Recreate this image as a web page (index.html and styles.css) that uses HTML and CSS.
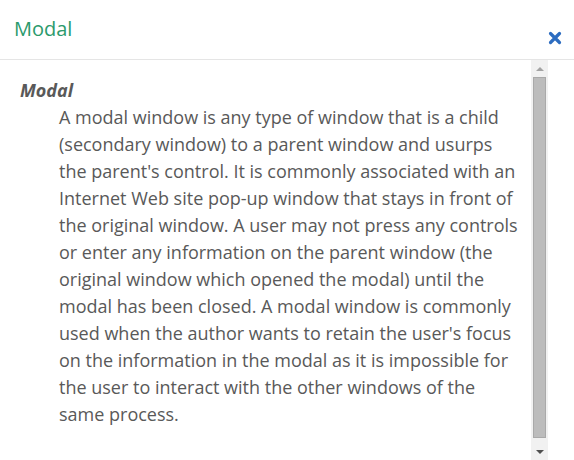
FILE: index.html
```html
<html>
  <head>
    <meta charset="utf-8" />
    <title>Modal</title>
    <link rel="stylesheet" href="styles.css">
  </head>
  <body>
    <div class="modal">
      <div class="modal-header">
        <h3 class="modal-title">Modal</h3>
        <button class="close" aria-label="Close">
          <svg width="14" height="14" viewBox="0 0 14 14">
            <path d="M2.5 2.5 L11.5 11.5 M11.5 2.5 L2.5 11.5" stroke="#2c6cc0" stroke-width="3.2" stroke-linecap="round" />
          </svg>
        </button>
      </div>
      <div class="modal-main">
        <div class="modal-body">
          <dl>
            <dt>Modal</dt>
            <dd>A modal window is any type of window that is a child (secondary window) to a parent window and usurps the parent's control. It is commonly associated with an Internet Web site pop-up window that stays in front of the original window. A user may not press any controls or enter any information on the parent window (the original window which opened the modal) until the modal has been closed. A modal window is commonly used when the author wants to retain the user's focus on the information in the modal as it is impossible for the user to interact with the other windows of the same process.</dd>
          </dl>
        </div>
        <div class="scrollbar">
          <div class="scroll-btn"><span class="arrow-up"></span></div>
          <div class="scroll-track"><div class="scroll-thumb"></div></div>
          <div class="scroll-btn"><span class="arrow-down"></span></div>
        </div>
      </div>
    </div>
  </body>
</html>
```

FILE: styles.css
```css
* {
  box-sizing: border-box;
  margin: 0;
  padding: 0;
}

body {
  background: #fff;
  font-family: 'Open Sans', sans-serif;
  overflow: hidden;
}

.modal {
  display: flex;
  flex-direction: column;
  height: 460px;
}

.modal-header {
  display: flex;
  flex-direction: row;
  justify-content: space-between;
  height: 60px;
  padding: 0 12px 0 14px;
  border-bottom: 1px solid #e5e5e5;
}

.modal-title {
  font-weight: normal;
  font-size: 20px;
  color: #2b9a6c;
  line-height: 60px;
  margin-top: -1px;
}

.close {
  background: transparent;
  border: none;
  margin-top: 31px;
  width: 14px;
  height: 14px;
  cursor: pointer;
}

.modal-main {
  display: flex;
  flex-direction: row;
  flex: 1;
  min-height: 0;
  margin-right: 26px;
}

.modal-body {
  flex: 1;
  overflow: hidden;
  padding: 17px 10px 11px 20px;
  color: #595959;
  font-size: 18px;
  line-height: 27px;
}

dt {
  font-weight: bold;
  font-style: italic;
}

dd {
  margin-left: 39px;
}

/* scrollbar drawn by hand, the screenshot hides native ones */
.scrollbar {
  width: 17px;
  display: flex;
  flex-direction: column;
  background: #f1f1f1;
}

.scroll-btn {
  height: 17px;
  display: flex;
  align-items: center;
  justify-content: center;
}

.arrow-up {
  border-left: 4px solid transparent;
  border-right: 4px solid transparent;
  border-bottom: 4px solid #a3a3a3;
  margin-top: 1px;
}

.arrow-down {
  border-left: 4px solid transparent;
  border-right: 4px solid transparent;
  border-top: 4px solid #505050;
  margin-top: 1px;
}

.scroll-track {
  flex: 1;
  display: flex;
  padding: 0 2px 5px 2px;
}

.scroll-thumb {
  flex: 1;
  background: #bcbcbc;
  border: 1px solid #a9a9a9;
}
```
